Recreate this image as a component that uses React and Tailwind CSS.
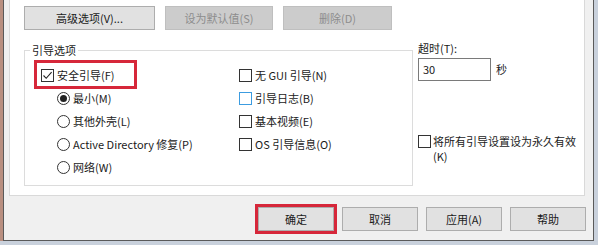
const font = { fontFamily: '"Microsoft YaHei", "Noto Sans CJK SC", "Noto Sans", sans-serif' };

function CheckBox({ checked, focus }) {
  return (
    <span
      className={`flex h-[13px] w-[13px] shrink-0 items-center justify-center border bg-white ${
        focus ? "border-[#3c9ce0]" : "border-[#333333]"
      }`}
    >
      {checked && (
        <svg width="11" height="11" viewBox="0 0 11 11">
          <path d="M1.5 5.5 L4.2 8.3 L9.6 2.2" fill="none" stroke="#222" strokeWidth="1.1" />
        </svg>
      )}
    </span>
  );
}

function Radio({ checked }) {
  return (
    <span className="flex h-[13px] w-[13px] shrink-0 items-center justify-center rounded-full border border-[#333333] bg-white">
      {checked && <span className="h-[7px] w-[7px] rounded-full bg-[#222]" />}
    </span>
  );
}

function Row({ children, className = "" }) {
  return <div className={`flex h-[23px] items-center gap-[3px] ${className}`}>{children}</div>;
}

function Btn({ children, disabled, className = "" }) {
  return (
    <button
      type="button"
      className={`flex h-[24px] items-center justify-center border ${
        disabled
          ? "border-[#bfbfbf] bg-[#cccccc] text-[#8c8c8c]"
          : "border-[#adadad] bg-[#e1e1e1] text-[#1a1a1a]"
      } ${className}`}
    >
      {children}
    </button>
  );
}

export default function App() {
  return (
    <div style={font} className="flex h-[245px] w-[598px] flex-col bg-[#c9d1dc] text-[11px] text-[#1a1a1a]">
      <div className="flex h-[241px]">
        <div className="w-[3px] bg-[#b98f80]" />
        <div className="flex flex-1 flex-col border-x border-b border-[#5a5a5a] bg-[#f0f0f0]">
          <div className="ml-[5px] mr-[8px] flex h-[196px] flex-col border-x border-b border-[#d9d9d9] bg-white">
            <div className="flex gap-[10px] pl-[14px] pt-[6px]">
              <Btn className="w-[131px]">高级选项(V)...</Btn>
              <Btn disabled className="w-[108px]">设为默认值(S)</Btn>
              <Btn disabled className="w-[109px]">删除(D)</Btn>
            </div>

            <div className="mt-[20px] flex">
              <div className="relative ml-[14px] h-[136px] w-[389px] border border-[#dcdcdc]">
                <span className="absolute -top-[8px] left-[5px] bg-white px-[2px] leading-[14px]">引导选项</span>
                <div className="flex pt-[13px]">
                  <div className="w-[214px] pl-[16px]">
                    <Row className="relative">
                      <CheckBox checked />
                      <span>安全引导(F)</span>
                      <span className="absolute -left-[7px] -top-[4px] h-[29px] w-[103px] border-[3px] border-[#d6273a]" />
                    </Row>
                    <div className="pl-[16px]">
                      <Row>
                        <Radio checked />
                        <span>最小(M)</span>
                      </Row>
                      <Row>
                        <Radio />
                        <span>其他外壳(L)</span>
                      </Row>
                      <Row>
                        <Radio />
                        <span>Active Directory 修复(P)</span>
                      </Row>
                      <Row>
                        <Radio />
                        <span>网络(W)</span>
                      </Row>
                    </div>
                  </div>
                  <div>
                    <Row>
                      <CheckBox />
                      <span>无 GUI 引导(N)</span>
                    </Row>
                    <Row>
                      <CheckBox focus />
                      <span>引导日志(B)</span>
                    </Row>
                    <Row>
                      <CheckBox />
                      <span>基本视频(E)</span>
                    </Row>
                    <Row>
                      <CheckBox />
                      <span>OS 引导信息(O)</span>
                    </Row>
                  </div>
                </div>
              </div>

              <div className="ml-[5px] flex flex-col">
                <span className="-mt-[9px] leading-[14px]">超时(T):</span>
                <div className="mt-[3px] flex items-center gap-[5px]">
                  <div className="flex h-[23px] w-[73px] items-center border border-[#7a7a7a] bg-white pl-[4px]">30</div>
                  <span>秒</span>
                </div>
                <div className="mt-[53px] flex w-[160px] gap-[2px]">
                  <span className="mt-[1px]">
                    <CheckBox />
                  </span>
                  <span className="leading-[15px]">将所有引导设置设为永久有效 (K)</span>
                </div>
              </div>
            </div>
          </div>

          <div className="mt-[11px] flex gap-[8px] pl-[254px]">
            <div className="relative">
              <Btn className="w-[76px] border-[#1f3c88]">确定</Btn>
              <span className="absolute -inset-[3px] border-[3px] border-[#d6273a]" />
            </div>
            <Btn className="w-[76px]">取消</Btn>
            <Btn className="w-[76px]">应用(A)</Btn>
            <Btn className="w-[76px]">帮助</Btn>
          </div>
        </div>
        <div className="w-[4px]" />
      </div>
    </div>
  );
}
